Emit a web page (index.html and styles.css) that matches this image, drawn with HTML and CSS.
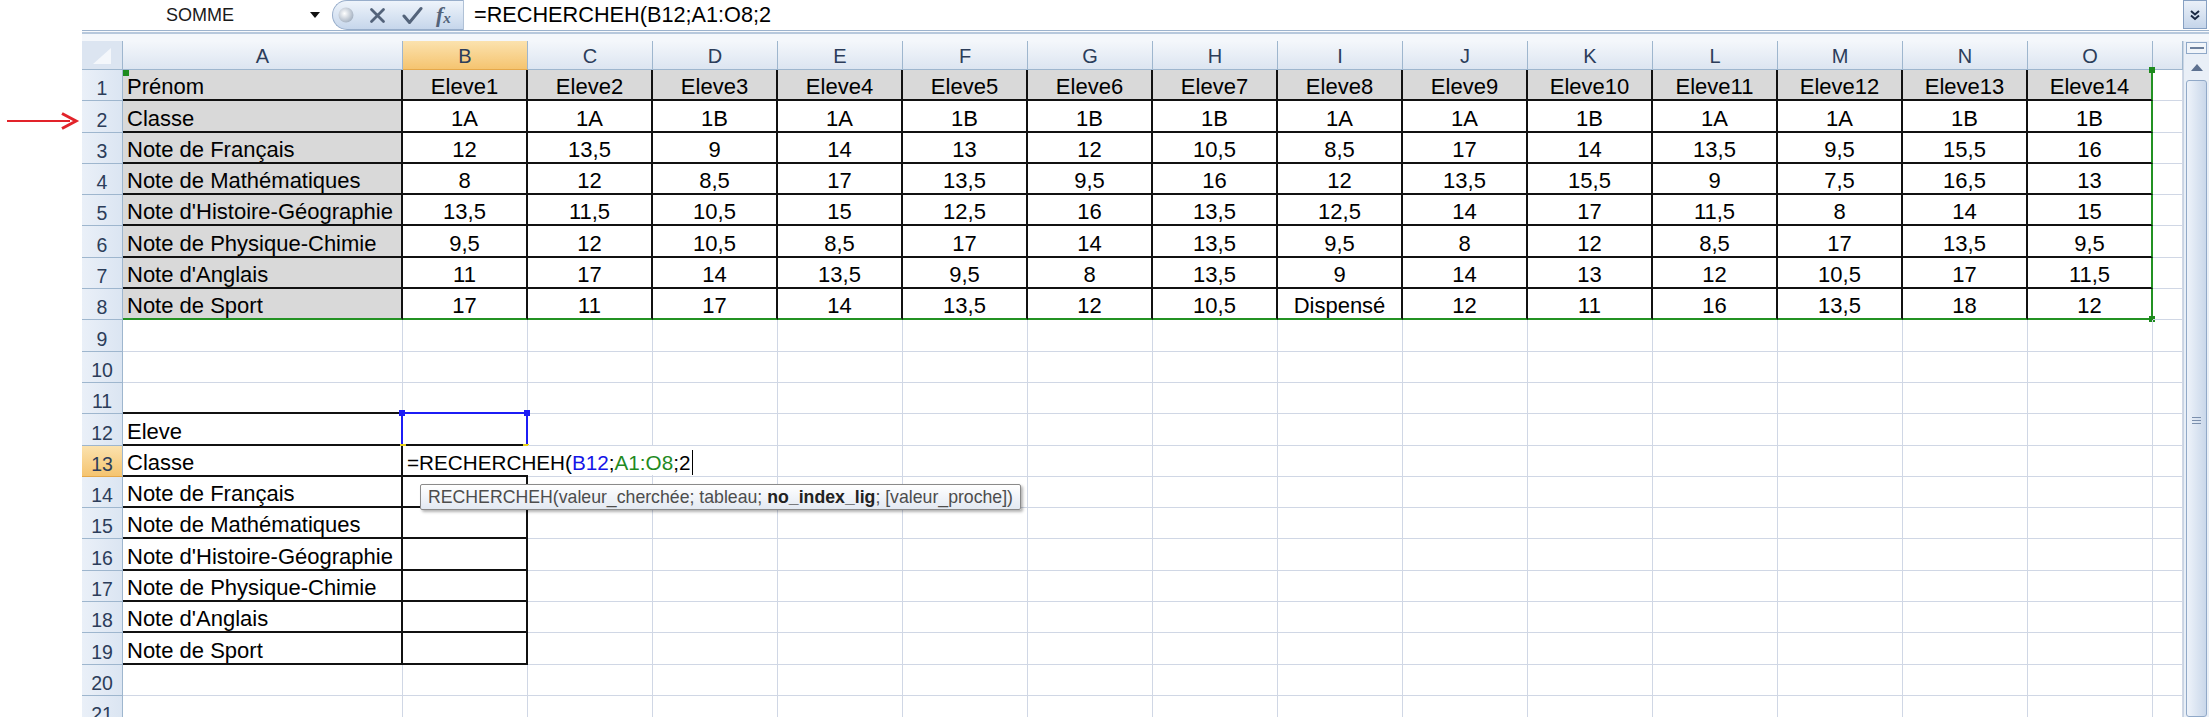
FILE: index.html
```html
<!DOCTYPE html>
<html lang="fr">
<head>
    <meta charset="UTF-8">
    <meta name="viewport" content="width=device-width, initial-scale=1.0">
    <title>RECHERCHEH - Classe</title>
    <link rel="stylesheet" href="styles.css">
</head>
<body>
    <div class="gutter">
        <svg class="arrow" width="82" height="20" viewBox="0 0 82 20">
            <path d="M7 9 L70 9 L70 11 L7 11 Z" fill="#e2232a"/>
            <polyline points="62,2.5 76,10 62,17.5" fill="none" stroke="#e2232a" stroke-width="3" stroke-linejoin="miter"/>
        </svg>
    </div>

    <div class="app">
        <!-- barre de formule -->
        <div class="fbar">
            <div class="namebox">
                <span>SOMME</span>
                <svg class="dd" width="10" height="6" viewBox="0 0 10 6"><polygon points="0,0 10,0 5,6" fill="#111"/></svg>
            </div>
            <div class="pill">
                <svg class="btn-dot" width="18" height="18" viewBox="0 0 18 18">
                    <defs><radialGradient id="dot" cx="40%" cy="40%" r="60%"><stop offset="0" stop-color="#ffffff"/><stop offset="1" stop-color="#a9b5c4"/></radialGradient></defs>
                    <circle cx="9" cy="9" r="7.5" fill="url(#dot)"/>
                </svg>
                <svg class="btn-x" width="17" height="17" viewBox="0 0 17 17"><path d="M2.5 2.5 L14.5 14.5 M14.5 2.5 L2.5 14.5" stroke="#53637a" stroke-width="2.8" stroke-linecap="round"/></svg>
                <svg class="btn-ok" width="21" height="19" viewBox="0 0 21 19"><path d="M2 10 L7.5 16.5 L19 2.5" fill="none" stroke="#53637a" stroke-width="3" stroke-linejoin="round" stroke-linecap="round"/></svg>
                <span class="fx">f<sub>x</sub></span>
            </div>
            <div class="input">=RECHERCHEH(B12;A1:O8;2</div>
            <div class="expand">
                <svg width="12" height="12" viewBox="0 0 12 12"><path d="M2 2 L6 5.5 L10 2 M2 6.5 L6 10 L10 6.5" fill="none" stroke="#1b2a44" stroke-width="2"/></svg>
            </div>
        </div>
        <div class="band"></div>

        <div class="main">
            <div class="grid">
                <div class="row hrow">
                    <span class="corner"><svg width="22" height="20" viewBox="0 0 22 20"><polygon points="20,2 20,18 2,18" fill="#f4f7fb"/></svg></span>
                    <span>A</span><span class="sel">B</span><span>C</span><span>D</span><span>E</span><span>F</span><span>G</span><span>H</span><span>I</span><span>J</span><span>K</span><span>L</span><span>M</span><span>N</span><span>O</span><span></span>
                </div>

                <div class="row">
                    <span class="rh">1</span>
                    <span class="g k"><i class="sq sq-tl"></i>Prénom</span>
                    <span class="g k c">Eleve1</span><span class="g k c">Eleve2</span><span class="g k c">Eleve3</span><span class="g k c">Eleve4</span><span class="g k c">Eleve5</span><span class="g k c">Eleve6</span><span class="g k c">Eleve7</span><span class="g k c">Eleve8</span><span class="g k c">Eleve9</span><span class="g k c">Eleve10</span><span class="g k c">Eleve11</span><span class="g k c">Eleve12</span><span class="g k c">Eleve13</span><span class="g k c gr"><i class="sq sq-tr"></i>Eleve14</span>
                    <span></span>
                </div>
                <div class="row">
                    <span class="rh">2</span>
                    <span class="g k">Classe</span>
                    <span class="k c">1A</span><span class="k c">1A</span><span class="k c">1B</span><span class="k c">1A</span><span class="k c">1B</span><span class="k c">1B</span><span class="k c">1B</span><span class="k c">1A</span><span class="k c">1A</span><span class="k c">1B</span><span class="k c">1A</span><span class="k c">1A</span><span class="k c">1B</span><span class="k c gr">1B</span>
                    <span></span>
                </div>
                <div class="row">
                    <span class="rh">3</span>
                    <span class="g k">Note de Français</span>
                    <span class="k c">12</span><span class="k c">13,5</span><span class="k c">9</span><span class="k c">14</span><span class="k c">13</span><span class="k c">12</span><span class="k c">10,5</span><span class="k c">8,5</span><span class="k c">17</span><span class="k c">14</span><span class="k c">13,5</span><span class="k c">9,5</span><span class="k c">15,5</span><span class="k c gr">16</span>
                    <span></span>
                </div>
                <div class="row">
                    <span class="rh">4</span>
                    <span class="g k">Note de Mathématiques</span>
                    <span class="k c">8</span><span class="k c">12</span><span class="k c">8,5</span><span class="k c">17</span><span class="k c">13,5</span><span class="k c">9,5</span><span class="k c">16</span><span class="k c">12</span><span class="k c">13,5</span><span class="k c">15,5</span><span class="k c">9</span><span class="k c">7,5</span><span class="k c">16,5</span><span class="k c gr">13</span>
                    <span></span>
                </div>
                <div class="row">
                    <span class="rh">5</span>
                    <span class="g k">Note d'Histoire-Géographie</span>
                    <span class="k c">13,5</span><span class="k c">11,5</span><span class="k c">10,5</span><span class="k c">15</span><span class="k c">12,5</span><span class="k c">16</span><span class="k c">13,5</span><span class="k c">12,5</span><span class="k c">14</span><span class="k c">17</span><span class="k c">11,5</span><span class="k c">8</span><span class="k c">14</span><span class="k c gr">15</span>
                    <span></span>
                </div>
                <div class="row">
                    <span class="rh">6</span>
                    <span class="g k">Note de Physique-Chimie</span>
                    <span class="k c">9,5</span><span class="k c">12</span><span class="k c">10,5</span><span class="k c">8,5</span><span class="k c">17</span><span class="k c">14</span><span class="k c">13,5</span><span class="k c">9,5</span><span class="k c">8</span><span class="k c">12</span><span class="k c">8,5</span><span class="k c">17</span><span class="k c">13,5</span><span class="k c gr">9,5</span>
                    <span></span>
                </div>
                <div class="row">
                    <span class="rh">7</span>
                    <span class="g k">Note d'Anglais</span>
                    <span class="k c">11</span><span class="k c">17</span><span class="k c">14</span><span class="k c">13,5</span><span class="k c">9,5</span><span class="k c">8</span><span class="k c">13,5</span><span class="k c">9</span><span class="k c">14</span><span class="k c">13</span><span class="k c">12</span><span class="k c">10,5</span><span class="k c">17</span><span class="k c gr">11,5</span>
                    <span></span>
                </div>
                <div class="row">
                    <span class="rh">8</span>
                    <span class="g k gb">Note de Sport</span>
                    <span class="k c gb">17</span><span class="k c gb">11</span><span class="k c gb">17</span><span class="k c gb">14</span><span class="k c gb">13,5</span><span class="k c gb">12</span><span class="k c gb">10,5</span><span class="k c gb">Dispensé</span><span class="k c gb">12</span><span class="k c gb">11</span><span class="k c gb">16</span><span class="k c gb">13,5</span><span class="k c gb">18</span><span class="k c gb gr"><i class="sq sq-br"></i>12</span>
                    <span></span>
                </div>

                <div class="row"><span class="rh">9</span><span></span><span></span><span></span><span></span><span></span><span></span><span></span><span></span><span></span><span></span><span></span><span></span><span></span><span></span><span></span><span></span></div>
                <div class="row"><span class="rh">10</span><span></span><span></span><span></span><span></span><span></span><span></span><span></span><span></span><span></span><span></span><span></span><span></span><span></span><span></span><span></span><span></span></div>
                <div class="row"><span class="rh">11</span><span class="kb"></span><span class="kb"></span><span></span><span></span><span></span><span></span><span></span><span></span><span></span><span></span><span></span><span></span><span></span><span></span><span></span><span></span></div>

                <div class="row">
                    <span class="rh">12</span>
                    <span class="k">Eleve</span>
                    <span class="k"><i class="ref-b12"></i><i class="bsq bsq-l"></i><i class="bsq bsq-r"></i><i class="ysq ysq-l"></i><i class="ysq ysq-r"></i></span>
                    <span></span><span></span><span></span><span></span><span></span><span></span><span></span><span></span><span></span><span></span><span></span><span></span><span></span><span></span>
                </div>
                <div class="row">
                    <span class="rh sel">13</span>
                    <span class="k">Classe</span>
                    <span class="k"><span class="edit">=RECHERCHEH(<em class="blue">B12</em>;<em class="green">A1:O8</em>;2<i class="caret"></i></span></span>
                    <span></span><span></span><span></span><span></span><span></span><span></span><span></span><span></span><span></span><span></span><span></span><span></span><span></span><span></span>
                </div>
                <div class="row">
                    <span class="rh">14</span>
                    <span class="k">Note de Français</span>
                    <span class="k"><span class="tip">RECHERCHEH(valeur_cherchée; tableau; <b>no_index_lig</b>; [valeur_proche])</span></span>
                    <span></span><span></span><span></span><span></span><span></span><span></span><span></span><span></span><span></span><span></span><span></span><span></span><span></span><span></span>
                </div>
                <div class="row">
                    <span class="rh">15</span>
                    <span class="k">Note de Mathématiques</span><span class="k"></span>
                    <span></span><span></span><span></span><span></span><span></span><span></span><span></span><span></span><span></span><span></span><span></span><span></span><span></span><span></span>
                </div>
                <div class="row">
                    <span class="rh">16</span>
                    <span class="k">Note d'Histoire-Géographie</span><span class="k"></span>
                    <span></span><span></span><span></span><span></span><span></span><span></span><span></span><span></span><span></span><span></span><span></span><span></span><span></span><span></span>
                </div>
                <div class="row">
                    <span class="rh">17</span>
                    <span class="k">Note de Physique-Chimie</span><span class="k"></span>
                    <span></span><span></span><span></span><span></span><span></span><span></span><span></span><span></span><span></span><span></span><span></span><span></span><span></span><span></span>
                </div>
                <div class="row">
                    <span class="rh">18</span>
                    <span class="k">Note d'Anglais</span><span class="k"></span>
                    <span></span><span></span><span></span><span></span><span></span><span></span><span></span><span></span><span></span><span></span><span></span><span></span><span></span><span></span>
                </div>
                <div class="row">
                    <span class="rh">19</span>
                    <span class="k">Note de Sport</span><span class="k"></span>
                    <span></span><span></span><span></span><span></span><span></span><span></span><span></span><span></span><span></span><span></span><span></span><span></span><span></span><span></span>
                </div>

                <div class="row"><span class="rh">20</span><span></span><span></span><span></span><span></span><span></span><span></span><span></span><span></span><span></span><span></span><span></span><span></span><span></span><span></span><span></span><span></span></div>
                <div class="row"><span class="rh">21</span><span></span><span></span><span></span><span></span><span></span><span></span><span></span><span></span><span></span><span></span><span></span><span></span><span></span><span></span><span></span><span></span></div>
            </div>

            <div class="vscroll">
                <div class="split"><i></i></div>
                <div class="up"><svg width="12" height="7" viewBox="0 0 12 7"><polygon points="0,7 12,7 6,0" fill="#5d7190"/></svg></div>
                <div class="thumb"><i></i><i></i><i></i></div>
            </div>
        </div>
    </div>
</body>
</html>
```

FILE: styles.css
```css
* {
    box-sizing: border-box;
}
body {
    margin: 0;
    width: 2209px;
    height: 717px;
    overflow: hidden;
    background: #fff;
    font-family: "Liberation Sans", Arial, sans-serif;
    display: flex;
}
.gutter {
    width: 82px;
    flex: none;
    padding-top: 111px;
}
.arrow {
    display: block;
}
.app {
    width: 2127px;
    display: flex;
    flex-direction: column;
}

/* barre de formule */
.fbar {
    height: 31px;
    display: flex;
    border-bottom: 1px solid #9db3cd;
}
.namebox {
    width: 250px;
    display: flex;
    align-items: center;
    padding-left: 84px;
    font-size: 18px;
    color: #1a1a1a;
}
.namebox .dd {
    margin-left: auto;
    margin-right: 12px;
}
.pill {
    width: 131px;
    height: 30px;
    border: 1px solid #98aecb;
    border-right: none;
    border-radius: 15px 0 0 15px;
    background: linear-gradient(#eef4fb, #c6d6eb);
    display: flex;
    align-items: center;
}
.btn-dot { margin-left: 4px; }
.btn-x { margin-left: 14px; }
.btn-ok { margin-left: 16px; }
.fx {
    margin-left: 13px;
    font-family: "Liberation Serif", serif;
    font-style: italic;
    font-weight: bold;
    font-size: 22px;
    color: #53637a;
}
.fx sub {
    font-size: 15px;
    vertical-align: -1px;
}
.input {
    flex: 1;
    border-left: 1px solid #b0c1d6;
    padding-left: 10px;
    font-size: 21.7px;
    display: flex;
    align-items: center;
    color: #000;
}
.expand {
    width: 24px;
    height: 29px;
    margin-right: 2px;
    border: 1px solid #86a0c2;
    background: linear-gradient(#eaf0f8, #c5d5ea);
    display: flex;
    align-items: center;
    justify-content: center;
}
.band {
    height: 10px;
    background: linear-gradient(#f7f9fc 0 1px, #b7c8dc 1px 3px, #f4f7fb 3px);
}

/* feuille */
.main {
    flex: 1;
    display: flex;
    min-height: 0;
}
.grid {
    width: 2101px;
    overflow: hidden;
}
.row {
    display: grid;
    grid-template-columns: 41px 280px repeat(14, 125px) 30px;
    height: 31.3px;
}
.row > span {
    position: relative;
    display: flex;
    align-items: flex-end;
    padding: 0 4px;
    border-right: 1px solid #d0d7e5;
    border-bottom: 1px solid #d0d7e5;
    white-space: nowrap;
    font-size: 22px;
    line-height: 24px;
    color: #000;
}
.row > span.c {
    justify-content: center;
}
.row > span.g {
    background: #d9d9d9;
}
.row > span.k {
    border-right: 2px solid #111;
    border-bottom: 2px solid #111;
}
.row > span.kb {
    border-bottom: 2px solid #111;
}
.row > span.gr {
    border-right-color: #239223;
}
.row > span.gb {
    border-bottom-color: #239223;
}

.row.hrow {
    height: 29px;
}
.hrow > span {
    justify-content: center;
    align-items: center;
    padding: 1px 0 0;
    background: linear-gradient(#f4f7fb, #dce5f1);
    border-right: 1px solid #9eb6ce;
    border-bottom: 1px solid #9eb6ce;
    color: #2c3d5a;
    font-size: 20px;
}
.row > span.rh {
    justify-content: center;
    padding: 0;
    background: linear-gradient(90deg, #eaf0f8, #dbe5f2);
    border-right: 1px solid #9eb6ce;
    border-bottom: 1px solid #9eb6ce;
    color: #2c3d5a;
    font-size: 19.5px;
}
.hrow > span.corner {
    background: #dce5f1;
}
.hrow > span.sel,
.row > span.rh.sel {
    background: linear-gradient(#fbe2ae, #f5c470);
    border-color: #e5a84a #9eb6ce;
}

/* poignées des plages */
.sq {
    position: absolute;
    width: 6px;
    height: 6px;
    background: #1d8a1d;
}
.sq-tl { left: 0; top: 0; }
.sq-tr { right: -4px; top: -3px; }
.sq-br { right: -4px; bottom: -4px; }

.ref-b12 {
    position: absolute;
    left: -2px;
    top: -2px;
    right: -2px;
    bottom: 0;
    border: 2px solid #1c1cf5;
    border-bottom: none;
}
.bsq {
    position: absolute;
    top: -4px;
    width: 6px;
    height: 6px;
    background: #1c1cf5;
}
.bsq-l { left: -4px; }
.bsq-r { right: -4px; }
.ysq {
    position: absolute;
    bottom: -2px;
    width: 6px;
    height: 2px;
    background: #e6d21e;
}
.ysq-l { left: -3px; }
.ysq-r { right: -3px; }

/* cellule en édition */
.edit {
    position: absolute;
    left: -1px;
    top: 0;
    bottom: 0;
    z-index: 2;
    display: flex;
    align-items: flex-end;
    padding: 0 3px 0 4px;
    background: #fff;
    border-left: 1px solid #111;
    font-size: 20.7px;
    line-height: 24px;
}
.edit em {
    font-style: normal;
}
.edit .blue { color: #1515e8; }
.edit .green { color: #1f8a1f; }
.caret {
    width: 1px;
    height: 25px;
    margin-left: 2px;
    background: #000;
}

.tip {
    position: absolute;
    left: 17px;
    top: 7px;
    z-index: 3;
    height: 26px;
    display: flex;
    align-items: center;
    padding: 0 7px;
    border: 1px solid #8a8a8a;
    border-radius: 2px;
    background: linear-gradient(#ffffff, #e3e9f2);
    box-shadow: 2px 2px 3px rgba(0,0,0,0.3);
    font-size: 17.7px;
    line-height: 20px;
    color: #4d4d4d;
    white-space: nowrap;
}
.tip b {
    margin-left: 5px;
    color: #222;
}

/* barre de défilement */
.vscroll {
    width: 26px;
    display: flex;
    flex-direction: column;
    background: #e9eff7;
    border-left: 1px solid #c8d4e3;
}
.split {
    height: 12px;
    margin: 1px 2px 0;
    border: 1px solid #8fa8c8;
    background: #f1f5fa;
    display: flex;
    align-items: center;
    justify-content: center;
}
.split i {
    width: 14px;
    height: 2px;
    background: #6c7f9c;
}
.up {
    height: 26px;
    display: flex;
    align-items: center;
    justify-content: center;
}
.thumb {
    flex: 1;
    margin: 0 2px;
    padding-top: 336px;
    border: 1px solid #91a9c8;
    border-radius: 3px;
    background: linear-gradient(90deg, #eef3fa, #c9d7ea);
    display: flex;
    flex-direction: column;
    align-items: center;
    gap: 2px;
}
.thumb i {
    width: 9px;
    height: 1px;
    background: #7b8fad;
}
```
